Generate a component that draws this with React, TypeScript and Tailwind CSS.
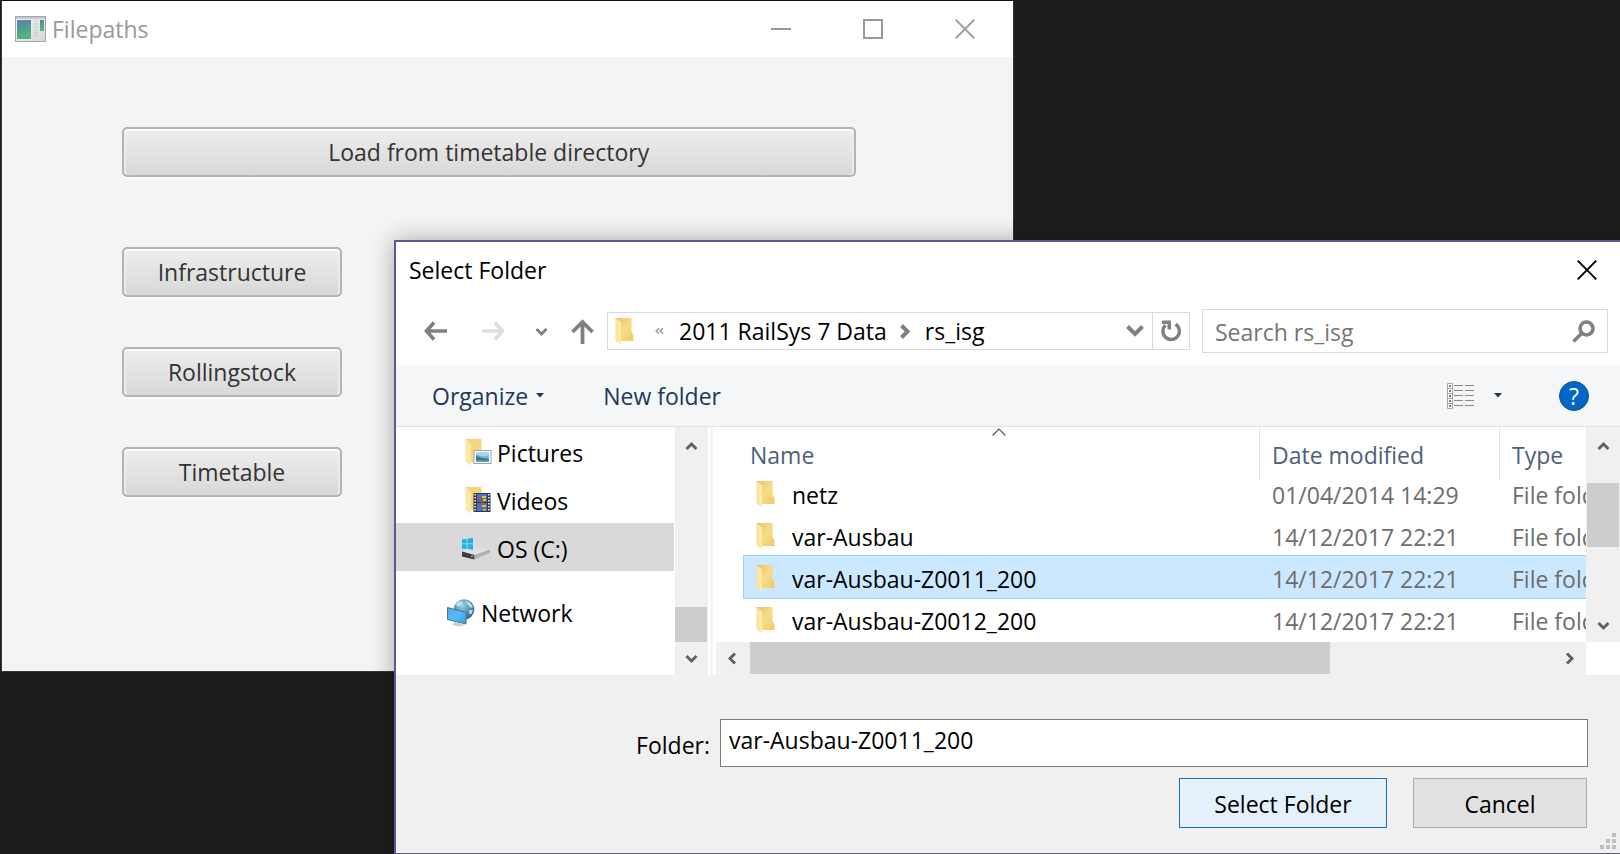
import React, { useState } from "react";

type IconProps = { className?: string };

function AppIcon() {
  return (
    <svg width="31" height="26" viewBox="0 0 31 26" aria-hidden="true">
      <defs>
        <linearGradient id="app-frame" x1="0" y1="0" x2="1" y2="1">
          <stop offset="0" stopColor="#fafafa" />
          <stop offset="1" stopColor="#d4d6d8" />
        </linearGradient>
        <linearGradient id="app-pane" x1="0" y1="0" x2="0.3" y2="1">
          <stop offset="0" stopColor="#5585a6" />
          <stop offset="0.45" stopColor="#4f9c98" />
          <stop offset="1" stopColor="#5cb377" />
        </linearGradient>
      </defs>
      <rect x="0.5" y="0.5" width="30" height="25" fill="url(#app-frame)" stroke="#a3a7ab" />
      <rect x="1" y="1" width="29" height="2" fill="#c3c9ce" />
      <rect x="2" y="4" width="14" height="19" fill="url(#app-pane)" />
      <path d="M2 12 Q8 7 16 8 L16 4 L2 4Z" fill="#5f87ad" opacity="0.6" />
      <path d="M18 5h5M18 8h5M18 11h5M18 14h5M18 17h5M18 20h5" stroke="#c3c6c9" />
      <rect x="25" y="4" width="4" height="11" fill="url(#app-pane)" />
    </svg>
  );
}

function CloseIcon({ className }: IconProps) {
  return (
    <svg width="20" height="20" viewBox="0 0 20 20" className={className} aria-hidden="true">
      <path d="M0.7 0.7 19.3 19.3M19.3 0.7 0.7 19.3" fill="none" stroke="currentColor" strokeWidth="1.9" />
    </svg>
  );
}

function FolderIcon() {
  return (
    <svg width="19" height="27" viewBox="0 0 19 27" aria-hidden="true">
      <defs>
        <linearGradient id="folder-back" x1="0" y1="0" x2="1" y2="1">
          <stop offset="0" stopColor="#e6c366" />
          <stop offset="0.5" stopColor="#f8dc86" />
          <stop offset="1" stopColor="#efcb69" />
        </linearGradient>
        <linearGradient id="folder-front" x1="0" y1="0" x2="1" y2="0">
          <stop offset="0" stopColor="#fbe093" />
          <stop offset="1" stopColor="#fdeeb5" />
        </linearGradient>
      </defs>
      <path d="M0.5 0H16.5V14L18.5 17V23H5.5Z" fill="url(#folder-back)" />
      <path d="M0.5 0 6 4.5V26.5L0.5 22.5Z" fill="url(#folder-front)" />
    </svg>
  );
}

function PicturesIcon() {
  return (
    <svg width="27" height="27" viewBox="0 0 27 27" aria-hidden="true">
      <path d="M0.5 0H16.5V23H5.5Z" fill="#f4d57c" />
      <path d="M0.5 0 6 4.5V26.5L0.5 22.5Z" fill="#fce8a6" />
      <rect x="9" y="11.5" width="17" height="13" fill="#fff" stroke="#9aa3ad" />
      <rect x="11" y="13.5" width="13" height="9" fill="#6fb4ea" />
      <path d="M11 13.5h13v3l-6 1-7-2z" fill="#a9d3f4" />
      <path d="M11 16.5 15 18.5 24 20V22.5H11Z" fill="#3f7d74" />
      <path d="M11 21h13v1.5H11z" fill="#4b97c9" />
    </svg>
  );
}

function VideosIcon() {
  return (
    <svg width="27" height="27" viewBox="0 0 27 27" aria-hidden="true">
      <path d="M0.5 0H16.5V23H5.5Z" fill="#f4d57c" />
      <path d="M0.5 0 6 4.5V26.5L0.5 22.5Z" fill="#fce8a6" />
      <rect x="8.5" y="6" width="17" height="19" fill="#33363c" />
      <path d="M10.2 7v17M23.8 7v17" stroke="#e6e6e6" strokeWidth="1.7" strokeDasharray="1.6 1.4" />
      <rect x="12" y="7" width="10" height="8" fill="#4773c8" />
      <rect x="12" y="16" width="10" height="8" fill="#4773c8" />
      <path d="M17 9h4v2h-4zM18 12h3v2h-3zM17 18h4v2h-4zM18 22h3v1.500h-3z" fill="#e3c52f" />
      <path d="M12 12h5v2h-5zM16 15h2v3h-2z" fill="#c4403a" />
      <path d="M17 11h3v1h-3zM15 14h6v1h-6z" fill="#3b8a45" />
    </svg>
  );
}

function DriveIcon() {
  return (
    <svg width="29" height="22" viewBox="0 0 29 22" aria-hidden="true">
      <path d="M0 13.500 12 7.500 28 11.500 12.500 17Z" fill="#dfe0e2" />
      <path d="M0 13.500 12.500 17V21.500L0 18.500Z" fill="#3b3b3b" />
      <path d="M12.500 17 28 11.500V15L12.500 21.500Z" fill="#aeb0b3" />
      <rect x="9" y="17.500" width="2" height="1.500" fill="#6fd06d" />
      <path d="M0 1.500 4.700 0.900V5.500H0ZM5.500 0.800 11 0V5.500H5.500ZM0 6.300H4.700V11L0 10.400ZM5.500 6.300H11V11.800L5.500 11.100Z" fill="#19b3e6" />
    </svg>
  );
}

function NetworkIcon() {
  return (
    <svg width="28" height="28" viewBox="0 0 28 28" aria-hidden="true">
      <defs>
        <radialGradient id="globe" cx="0.4" cy="0.3" r="0.75">
          <stop offset="0" stopColor="#a5d4ea" />
          <stop offset="0.55" stopColor="#4b93b6" />
          <stop offset="1" stopColor="#2a6480" />
        </radialGradient>
        <linearGradient id="screen" x1="0" y1="0" x2="1" y2="1">
          <stop offset="0" stopColor="#4aa7ea" />
          <stop offset="0.5" stopColor="#58bdf8" />
          <stop offset="1" stopColor="#2f9be6" />
        </linearGradient>
      </defs>
      <circle cx="17" cy="10.500" r="10.300" fill="url(#globe)" />
      <path d="M9 4.500 13 2 16 3 13.500 6.500 10 7.500ZM18 1.500 23 3.500 26 8 23.500 9 21 6ZM22 11 26 11 24.500 15 22.500 15Z" fill="#cfe6ee" opacity="0.85" />
      <path d="M0.500 8.500 19 13.500V25L0.500 20.500Z" fill="url(#screen)" stroke="#55707f" />
      <path d="M8 23 14 24.500 18 26 12 27.500 5 26Z" fill="#c9ced2" />
    </svg>
  );
}

type Direction = "up" | "down" | "left" | "right";

const chevronPaths: Record<Direction, string> = {
  up: "M1.500 9 6.500 4 11.500 9",
  down: "M1.500 4 6.500 9 11.500 4",
  left: "M9 1.500 4 6.500 9 11.500",
  right: "M4 1.500 9 6.500 4 11.500",
};

function Chevron({ direction }: { direction: Direction }) {
  return (
    <svg width="13" height="13" viewBox="0 0 13 13" aria-hidden="true">
      <path d={chevronPaths[direction]} fill="none" stroke="currentColor" strokeWidth="2.900" />
    </svg>
  );
}

function Caret() {
  return (
    <svg width="8" height="5" viewBox="0 0 8 5" aria-hidden="true">
      <path d="M0 0H8L4 4.500Z" fill="currentColor" />
    </svg>
  );
}

function ScrollButton({ direction, label }: { direction: Direction; label: string }) {
  return (
    <button
      type="button"
      aria-label={label}
      className={`flex size-[33px] shrink-0 items-center justify-center text-[#606060] ${direction === "up" ? "pt-[6px]" : ""}`}
    >
      <Chevron direction={direction} />
    </button>
  );
}

function FxButton({ children, className = "" }: { children: React.ReactNode; className?: string }) {
  return (
    <button
      type="button"
      className={`h-[50px] rounded-[5px] border-2 border-[#b4b4b4] bg-linear-to-b from-[#eeeeee] to-[#d8d8d8] text-[#333333] shadow-[inset_0_2px_0_#fcfcfc,inset_2px_0_0_#ececec,inset_-2px_0_0_#ececec,0_2px_0_#fbfbfb] ${className}`}
    >
      {children}
    </button>
  );
}

function FilepathsWindow() {
  return (
    <section aria-label="Filepaths" className="absolute top-0 left-px w-5/8 border border-[#363636] border-t-[#111111] bg-[#f4f4f4]">
      <header className="flex h-14 items-center bg-white pl-[13px] text-[#999999]">
        <AppIcon />
        <h1 className="ml-[6px] flex-1">Filepaths</h1>
        <div className="flex items-center gap-[72px] pr-[38px]">
          <button type="button" aria-label="Minimize" className="flex size-5 items-center">
            <span className="h-[2px] w-full bg-[#999999]" />
          </button>
          <button type="button" aria-label="Maximize" className="size-5 border-2 border-[#999999]" />
          <button type="button" aria-label="Close" className="size-5">
            <CloseIcon />
          </button>
        </div>
      </header>
      <div className="flex flex-col items-start pt-[70px] pr-[157px] pb-[174px] pl-[120px]">
        <FxButton className="w-full">Load from timetable directory</FxButton>
        <div className="mt-[70px] flex w-[220px] flex-col gap-[50px]">
          <FxButton>Infrastructure</FxButton>
          <FxButton>Rollingstock</FxButton>
          <FxButton>Timetable</FxButton>
        </div>
      </div>
    </section>
  );
}

function NavigationBar() {
  return (
    <div className="flex h-[44px] items-center pr-3 pl-7 text-[#808080]">
      <button type="button" aria-label="Back">
        <svg width="23" height="20" viewBox="0 0 23 20" aria-hidden="true">
          <path d="M10 1.500 2.500 10 10 18.500M2.500 10H23" fill="none" stroke="currentColor" strokeWidth="3.600" />
        </svg>
      </button>
      <button type="button" aria-label="Forward" className="ml-[35px] text-[#dedede]">
        <svg width="23" height="20" viewBox="0 0 23 20" aria-hidden="true">
          <path d="M13 1.500 20.500 10 13 18.500M20.500 10H0" fill="none" stroke="currentColor" strokeWidth="3.600" />
        </svg>
      </button>
      <button type="button" aria-label="Recent locations" className="ml-[30px]">
        <Chevron direction="down" />
      </button>
      <button type="button" aria-label="Up" className="ml-[23px]">
        <svg width="23" height="25" viewBox="0 0 23 25" aria-hidden="true">
          <path d="M1.500 13 11.500 3 21.500 13M11.500 3V25" fill="none" stroke="currentColor" strokeWidth="3.800" />
        </svg>
      </button>
      <div className="ml-[13px] flex h-[38px] min-w-0 flex-1 items-center border border-[#d9d9d9] bg-white pl-[7px]">
        <FolderIcon />
        <button type="button" aria-label="Earlier folders" className="ml-[21px]">
          <svg width="9" height="6" viewBox="0 0 9 6" aria-hidden="true">
            <path d="M4 0.400 1 3 4 5.600M8 0.400 5 3 8 5.600" fill="none" stroke="currentColor" strokeWidth="1.200" />
          </svg>
        </button>
        <button type="button" className="ml-[15px] whitespace-nowrap text-black">2011 RailSys 7 Data</button>
        <span className="ml-[13px]">
          <svg width="11" height="15" viewBox="0 0 11 15" aria-hidden="true">
            <path d="M1.500 1.500 7.500 7.500 1.500 13.500" fill="none" stroke="currentColor" strokeWidth="4" />
          </svg>
        </span>
        <button type="button" className="ml-[14px] text-black">rs_isg</button>
        <button type="button" aria-label="Previous locations" className="mr-2 ml-auto">
          <svg width="18" height="12" viewBox="0 0 18 12" aria-hidden="true">
            <path d="M1.500 1.500 9 9 16.500 1.500" fill="none" stroke="currentColor" strokeWidth="4" />
          </svg>
        </button>
        <button type="button" aria-label="Refresh" className="flex h-full w-[37px] items-center justify-center border-l border-[#d9d9d9]">
          <svg width="20" height="22" viewBox="0 0 20 22" aria-hidden="true">
            <path d="M14.500 4.300A8.200 8.200 0 1 1 4.500 5.300" fill="none" stroke="currentColor" strokeWidth="3.400" />
            <path d="M1 0.500H10V9.500H6.500V4H1Z" fill="currentColor" />
          </svg>
        </button>
      </div>
      <div className="ml-3 flex h-[44px] w-[406px] shrink-0 items-center border border-[#d9d9d9] bg-white px-3">
        <input
          type="search"
          aria-label="Search rs_isg"
          placeholder="Search rs_isg"
          className="min-w-0 flex-1 bg-transparent pt-[2px] outline-none placeholder:text-[#757575]"
        />
        <svg width="23" height="23" viewBox="0 0 23 23" aria-hidden="true">
          <circle cx="14.500" cy="8.500" r="6.500" fill="none" stroke="currentColor" strokeWidth="3.600" />
          <path d="M10 13 1.500 21.500" stroke="currentColor" strokeWidth="3.600" />
        </svg>
      </div>
    </div>
  );
}

function Toolbar() {
  return (
    <div className="mt-3 flex h-[62px] items-center border-b border-[#dfe3e8] bg-[#f4f6f8] pr-[31px] pl-[36px] text-[#1e395b]">
      <button type="button" className="flex items-center gap-2">
        Organize
        <Caret />
      </button>
      <button type="button" className="ml-[59px]">New folder</button>
      <button type="button" aria-label="Change your view" className="ml-auto">
        <svg width="27" height="26" viewBox="0 0 27 26" aria-hidden="true">
          <path d="M0.500 0.500h5v25h-5zM0.500 5.500h5M0.500 10.500h5M0.500 15.500h5M0.500 20.500h5" fill="#fff" stroke="#a5a5a5" />
          <path d="M2 3h2M2 8h2M2 18h2M2 23h2" stroke="#77808a" strokeWidth="2" />
          <path d="M2 13h2" stroke="#b0552f" strokeWidth="2" />
          <path d="M7 2.500h9M18 2.500h9M7 7.500h9M18 7.500h9M7 12.500h9M18 12.500h9M7 17.500h9M18 17.500h9M7 22.500h9M18 22.500h9" stroke="#8a8a8a" />
        </svg>
      </button>
      <button type="button" aria-label="More view options" className="ml-5">
        <Caret />
      </button>
      <button
        type="button"
        aria-label="Get help"
        className="ml-[57px] flex size-[30px] items-center justify-center rounded-full border border-[#0b4f91] bg-[#0067c8] text-white"
      >
        ?
      </button>
    </div>
  );
}

const places = [
  { name: "Pictures", icon: <PicturesIcon />, inset: "pl-[69px]", gap: "gap-[5px]" },
  { name: "Videos", icon: <VideosIcon />, inset: "pl-[69px]", gap: "gap-[5px]" },
  { name: "OS (C:)", icon: <DriveIcon />, inset: "pl-[66px]", gap: "gap-[6px]", current: true },
  { name: "Network", icon: <NetworkIcon />, inset: "pl-[51px]", gap: "gap-[6px]", spaced: true },
];

function PlacesPane() {
  return (
    <nav aria-label="Places" className="flex shrink-0 bg-white">
      <ul className="w-[278px]">
        {places.map((place) => (
          <li key={place.name} className={place.spaced ? "mt-4" : ""}>
            <a
              href="#"
              aria-current={place.current ? "location" : undefined}
              className={`flex h-12 items-center pt-[3px] ${place.inset} ${place.gap} ${place.current ? "bg-[#d9d9d9]" : ""}`}
            >
              {place.icon}
              {place.name}
            </a>
          </li>
        ))}
      </ul>
      <div className="ml-px flex w-[33px] flex-col bg-[#f0f0f0]">
        <ScrollButton direction="up" label="Scroll places up" />
        <div className="mt-auto mr-px h-[35px] bg-[#cdcdcd]" />
        <ScrollButton direction="down" label="Scroll places down" />
      </div>
    </nav>
  );
}

const folders = [
  { name: "netz", modified: "01/04/2014 14:29" },
  { name: "var-Ausbau", modified: "14/12/2017 22:21" },
  { name: "var-Ausbau-Z0011_200", modified: "14/12/2017 22:21" },
  { name: "var-Ausbau-Z0012_200", modified: "14/12/2017 22:21" },
];

function FolderTable({ selected, onSelect }: { selected: string; onSelect: (name: string) => void }) {
  return (
    <div className="min-w-0 flex-1 overflow-hidden bg-white pl-7">
      <table className="w-[calc(100%+74px)] table-fixed border-separate border-spacing-0 text-left whitespace-nowrap">
        <thead className="text-[#4c607a]">
          <tr className="h-[45px]">
            <th scope="col" aria-sort="ascending" className="relative p-0 pt-[11px] pl-[6px] font-normal">
              Name
              <svg width="14" height="8" viewBox="0 0 14 8" className="absolute top-px left-1/2 -translate-x-2.5" aria-hidden="true">
                <path d="M0.500 7.500 7 1 13.500 7.500" fill="none" stroke="#555555" strokeWidth="1.200" />
              </svg>
              <span className="absolute top-0 right-0 h-[52px] w-px bg-[#e0e4e9]" />
            </th>
            <th scope="col" className="relative w-[240px] p-0 pt-[11px] pl-3 font-normal">
              Date modified
              <span className="absolute top-0 right-0 h-[52px] w-px bg-[#e0e4e9]" />
            </th>
            <th scope="col" className="w-[160px] p-0 pt-[11px] pl-3 font-normal">Type</th>
          </tr>
        </thead>
        <tbody>
          {folders.map((folder) => {
            const active = folder.name === selected;
            return (
              <tr
                key={folder.name}
                aria-selected={active}
                onClick={() => onSelect(folder.name)}
                className={`h-[42px] text-[#6d6d6d] ${active ? "bg-[#cce8ff] shadow-[0_0_0_1px_#99d1ff]" : ""}`}
              >
                <td className="p-0 pt-[3px] pl-3 text-black">
                  <span className="flex items-center gap-[17px]">
                    <FolderIcon />
                    {folder.name}
                  </span>
                </td>
                <td className="p-0 pt-[3px] pl-3">{folder.modified}</td>
                <td className="p-0 pt-[3px] pl-3">File folder</td>
              </tr>
            );
          })}
        </tbody>
      </table>
    </div>
  );
}

function FolderPane({ selected, onSelect }: { selected: string; onSelect: (name: string) => void }) {
  return (
    <div className="flex min-w-0 flex-1 flex-col">
      <div className="flex h-[215px]">
        <FolderTable selected={selected} onSelect={onSelect} />
        <div className="flex w-[34px] shrink-0 flex-col bg-[#f0f0f0] pl-px">
          <ScrollButton direction="up" label="Scroll folders up" />
          <div className="mt-[23px] mr-px h-16 bg-[#cdcdcd]" />
          <div className="flex-1" />
          <ScrollButton direction="down" label="Scroll folders down" />
        </div>
      </div>
      <div className="flex h-[33px] pr-[34px]">
        <div className="flex min-w-0 flex-1 bg-[#f0f0f0]">
          <ScrollButton direction="left" label="Scroll folders left" />
          <div className="flex flex-1 pb-px pl-px">
            <div className="flex-[13] bg-[#cdcdcd]" />
            <div className="flex-[5]" />
          </div>
          <ScrollButton direction="right" label="Scroll folders right" />
        </div>
      </div>
    </div>
  );
}

function ResizeGrip() {
  return (
    <svg width="16" height="16" viewBox="0 0 16 16" className="absolute right-1 bottom-1" aria-hidden="true">
      <path d="M12 0h4v4h-4zM6 6h4v4h-4zM12 6h4v4h-4zM0 12h4v4h-4zM6 12h4v4h-4zM12 12h4v4h-4z" fill="#bfbfbf" />
    </svg>
  );
}

function SelectFolderDialog() {
  const [folder, setFolder] = useState("var-Ausbau-Z0011_200");

  return (
    <section
      role="dialog"
      aria-label="Select Folder"
      className="absolute top-[240px] right-0 bottom-0 left-[394px] flex min-h-[614px] flex-col border-t-2 border-b border-l-2 border-[#63568f] bg-white text-black shadow-[0_0_22px_rgba(0,0,0,0.32)]"
    >
      <header className="flex h-[67px] items-center justify-between pr-[23px] pb-3 pl-[13px]">
        <h2>Select Folder</h2>
        <button type="button" aria-label="Close dialog">
          <CloseIcon />
        </button>
      </header>
      <NavigationBar />
      <Toolbar />
      <div className="flex h-[248px] bg-white">
        <PlacesPane />
        <div className="mr-[3px] ml-[2px] w-[3px] shrink-0 bg-[#f5f5f5]" />
        <FolderPane selected={folder} onSelect={setFolder} />
      </div>
      <form className="relative flex-1 bg-[#f0f0f0] pt-11 pr-8" onSubmit={(event) => event.preventDefault()}>
        <div className="flex items-center">
          <label htmlFor="folder-name" className="w-[324px] pt-[3px] pr-[10px] text-right">Folder:</label>
          <input
            id="folder-name"
            type="text"
            value={folder}
            onChange={(event) => setFolder(event.target.value)}
            className="h-12 min-w-0 flex-1 border border-[#7a7a7a] bg-white pb-[6px] pl-2 outline-none"
          />
        </div>
        <div className="mt-[11px] flex justify-end gap-[26px] pr-px">
          <button type="submit" className="h-[50px] w-[208px] border border-[#1a6fb5] bg-[#e4f1fb] pt-[2px]">Select Folder</button>
          <button type="button" className="h-[50px] w-[174px] border border-[#adadad] bg-[#e1e1e1] pt-[2px]">Cancel</button>
        </div>
        <ResizeGrip />
      </form>
    </section>
  );
}

export default function App() {
  return (
    <main className="relative min-h-screen overflow-hidden bg-[#1d1d1d] font-['Open_Sans','Noto_Sans',sans-serif] text-[23px] leading-8">
      <FilepathsWindow />
      <SelectFolderDialog />
    </main>
  );
}
